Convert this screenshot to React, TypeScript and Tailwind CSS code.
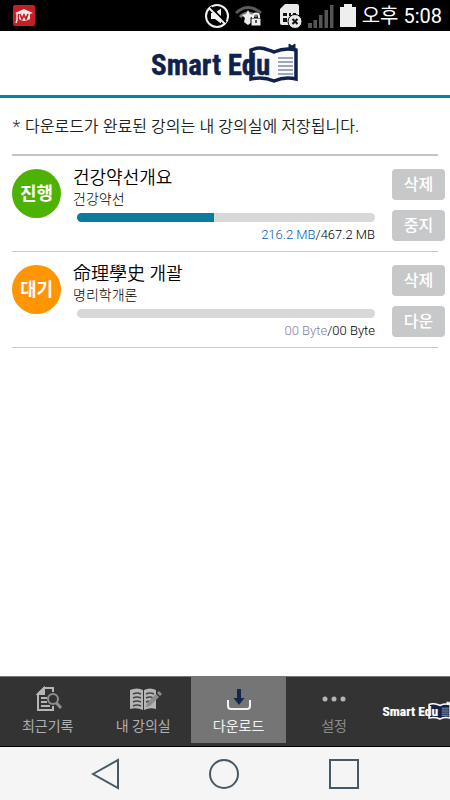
import React from 'react';
import clsx from 'clsx';

interface Lecture {
    title: string;
    course: string;
    status: string;
    active: boolean;
    done: string;
    total: string;
    percent: number;
    action: string;
}

const lectures: Lecture[] = [
    { title: '건강약선개요', course: '건강약선', status: '진행', active: true, done: '216.2 MB', total: '467.2 MB', percent: 46, action: '중지' },
    { title: '命理學史 개괄', course: '명리학개론', status: '대기', active: false, done: '00 Byte', total: '00 Byte', percent: 0, action: '다운' },
];

const Logo: React.FC<{ light?: boolean; className?: string }> = ({ light, className }) => {
    const ink = light ? '#ffffff' : '#10224b';
    const page = light ? '#10224b' : '#fafafa';
    return (
        <svg viewBox="0 0 150 42" className={className} role="img" aria-label="Smart Edu">
            <path
                d="M101 7C110 3 116 6 124 9C131 6 138 5 146 7V36C138 34 131 35 124 38C117 35 110 34 101 36Z"
                fill={page}
                stroke={ink}
                strokeWidth="3.500"
            />
            <path d="M139 7V1L142 3L145 1V7Z" fill={ink} stroke={ink} strokeWidth="1" />
            <path d="M128 15H143M128 19H143M128 23H143M128 27H143M128 31H143" stroke={light ? '#c5cbd8' : '#7f8ba5'} strokeWidth="1.4" />
            <text
                x="1"
                y="32"
                fontSize="29"
                fill={ink}
                stroke={ink}
                strokeWidth="0.4"
                className="font-['Roboto_Condensed','Liberation_Sans_Narrow','Liberation_Sans',sans-serif] font-bold"
            >
                Smart Edu
            </text>
        </svg>
    );
};

const StatusBar: React.FC = () => (
    <div className="flex h-[31px] items-center bg-black pl-[13px] pr-2 text-white">
        <svg viewBox="0 0 22 22" className="size-[22px]">
            <rect width="22" height="21" rx="2" fill="#c41f27" />
            <path d="M2 8L11 4L20 8L17 9V14Q11 18 6 14V9Z" fill="#f3e9e6" />
            <path d="M4 8V15L3 18" stroke="#f3e9e6" strokeWidth="1.4" fill="none" />
            <path d="M7 9L9 14L11 10L13 14L15 9" stroke="#c41f27" strokeWidth="1.7" fill="none" />
        </svg>
        <div className="ml-auto flex items-center">
            <svg viewBox="0 0 24 24" className="mr-[6px] size-6" fill="none" stroke="#f2f2f2" strokeWidth="2">
                <circle cx="12" cy="12" r="11" />
                <path d="M6 9H10L16 4.500V19.500L10 15H6Z" fill="#f2f2f2" stroke="none" />
                <path d="M5.500 3L21 18.500" stroke="#000" strokeWidth="2" />
                <path d="M4 4L20 20" />
            </svg>
            <svg viewBox="0 0 27 22" className="mr-4 h-[22px] w-[27px]" fill="none">
                <path d="M1 8Q13 -3 26 8" stroke="#5b5b5b" strokeWidth="3" />
                <path d="M5 12Q13 4 22 12" stroke="#777" strokeWidth="3" />
                <path d="M13 5L15 9L19 10L16 13L17 17L13 20L9 17L10 13L7 10L11 9Z" fill="#eee" />
                <rect x="16" y="13" width="10" height="8" fill="#eee" stroke="#000" />
                <path d="M18 13V11.500A2.500 2.500 0 0 1 24 11.500V13" stroke="#eee" strokeWidth="2" />
                <path d="M21 15V18" stroke="#222" strokeWidth="1.500" />
            </svg>
            <svg viewBox="0 0 25 27" className="mr-[5px] h-[27px] w-[25px]">
                <path d="M2 7L7 2H19Q21 2 21 4V21Q21 23 19 23H4Q2 23 2 21Z" fill="#e9e9e9" />
                <path d="M5 11H9V14H5ZM11 11H13V14H11ZM15 11H18V14H15ZM5 16H9V20H5ZM11 16H13V20H11Z" fill="#111" />
                <circle cx="17" cy="19.500" r="7" fill="#e9e9e9" stroke="#000" />
                <path d="M14.500 17L19.500 22M19.500 17L14.500 22" stroke="#111" strokeWidth="2" />
            </svg>
            <svg viewBox="0 0 26 24" className="mr-[6px] h-6 w-[26px]" fill="#555">
                <path d="M0 19H4V24H0ZM5.500 16H9V24H5.500ZM11 11H14.500V24H11ZM16.500 6H20V24H16.500ZM22 1H25.500V24H22Z" />
            </svg>
            <svg viewBox="0 0 16 23" className="mr-[6px] h-[23px] w-4" fill="#eee">
                <path d="M4 0H12V3H16V23H0V3H4Z" />
            </svg>
            <span className="text-xl leading-6">오후 5:08</span>
        </div>
    </div>
);

const GrayButton: React.FC<{ label: string }> = ({ label }) => (
    <button type="button" className="h-[31px] w-[53px] rounded bg-[#c7c8ca] text-base font-medium leading-6 text-white">
        {label}
    </button>
);

const LectureRow: React.FC<{ lecture: Lecture }> = ({ lecture }) => (
    <li className="mx-3 flex h-24 border-b border-[#c8c8c8] pt-[13px]">
        <span
            className={clsx(
                'flex size-[49px] shrink-0 items-center justify-center rounded-full text-lg font-bold text-white',
                lecture.active ? 'bg-[#4db202]' : 'bg-[#ff9500]'
            )}
        >
            {lecture.status}
        </span>
        <div className="ml-3 min-w-0 flex-1">
            <h2 className="text-lg font-[350] leading-[18px] text-black">{lecture.title}</h2>
            <p className="text-sm font-light leading-6 text-black">{lecture.course}</p>
            <div
                role="progressbar"
                aria-label={lecture.title}
                aria-valuenow={lecture.percent}
                className="ml-1 mt-[2px] h-[9px] overflow-hidden rounded-full bg-[#d8d8d8]"
            >
                <div className="h-full bg-[#0b7b9b]" style={{ width: `${lecture.percent}%` }} />
            </div>
            <p className="mt-[5px] text-right text-[13px] font-light leading-4 text-black">
                <span className={lecture.active ? 'text-[#0062b8]' : 'text-[#8580a8]'}>{lecture.done}</span>/{lecture.total}
            </p>
        </div>
        <div className="-mr-[7px] ml-[17px] flex flex-col gap-[10px]">
            <GrayButton label="삭제" />
            <GrayButton label={lecture.action} />
        </div>
    </li>
);

const RecentIcon = () => (
    <svg viewBox="-3 0 30 26" className="h-[26px] w-[30px]" fill="none" stroke="#b5b5b5" strokeWidth="2">
        <path d="M17 6V2H8L2 8V24H17V20" />
        <path d="M8 2V8H2Z" fill="#b5b5b5" />
        <path d="M5 12H11M5 16H11M5 20H14" />
        <circle cx="17" cy="13" r="5" stroke="#8f8f8f" fill="#333" />
        <path d="M20.500 17L25 22" stroke="#8f8f8f" strokeWidth="3" />
    </svg>
);

const ClassroomIcon = () => (
    <svg viewBox="-7 0 41 26" className="h-[26px] w-[41px]" fill="none">
        <path d="M0 4Q7 1 13 4V24Q7 21 0 23ZM14 4Q20 1 26 4V23Q20 21 14 24Z" fill="#b5b5b5" />
        <path d="M3 8Q7 6 11 8M3 12Q7 10 11 12M3 16Q7 14 11 16M3 20Q7 18 11 20M16 8Q20 6 24 8M16 12Q20 10 23 12M16 16L19 15" stroke="#444" strokeWidth="1.500" />
        <path d="M16 21L17 17L26 8L29 11L20 20Z" fill="#8c8c8c" />
        <path d="M27 7L29 5L32 8L30 10Z" fill="#8c8c8c" />
    </svg>
);

const DownloadIcon = () => (
    <svg viewBox="0 0 26 26" className="size-[26px]" fill="none">
        <path d="M2 14V20Q2 23 5 23H21Q24 23 24 20V14" stroke="#f2f2f2" strokeWidth="2" />
        <path d="M11 3H15V12H18.500L13 19L7.500 12H11Z" fill="#13264f" />
    </svg>
);

const MoreIcon = () => (
    <svg viewBox="0 0 26 26" className="size-[26px]" fill="#b5b5b5">
        <circle cx="4" cy="13" r="2.500" />
        <circle cx="13" cy="13" r="2.500" />
        <circle cx="22" cy="13" r="2.500" />
    </svg>
);

const tabs = [
    { label: '최근기록', icon: <RecentIcon />, tone: 'text-[#b0b0b0]' },
    { label: '내 강의실', icon: <ClassroomIcon />, tone: 'text-[#b0b0b0]' },
    { label: '다운로드', icon: <DownloadIcon />, tone: 'bg-[#757575] text-[#f2f2f2]' },
    { label: '설정', icon: <MoreIcon />, tone: 'text-[#8c8c8c]' },
];

const App: React.FC = () => (
    <div className="flex min-h-screen flex-col bg-white font-['Roboto','Noto_Sans_CJK_KR',sans-serif]">
        <StatusBar />
        <header className="flex h-[67px] justify-center border-b-[3px] border-[#0b7f9f] pt-3">
            <Logo className="h-[42px] w-[150px]" />
        </header>

        <main className="flex-1">
            <p className="mx-3 border-b-2 border-[#c4c4c4] py-4 font-['Noto_Sans','Noto_Sans_CJK_KR',sans-serif] text-base font-[350] leading-6 text-[#222]">
                * 다운로드가 완료된 강의는 내 강의실에 저장됩니다.
            </p>
            <ul>
                {lectures.map((lecture) => (
                    <LectureRow key={lecture.title} lecture={lecture} />
                ))}
            </ul>
        </main>

        <nav className="flex h-[71px] overflow-hidden border-b border-t border-b-black border-t-[#777] bg-[#333]">
            {tabs.map((tab) => (
                <button
                    key={tab.label}
                    type="button"
                    className={clsx('flex h-[66px] min-w-0 flex-[7] flex-col items-center pt-[9px] text-sm leading-5', tab.tone)}
                >
                    {tab.icon}
                    <span className="mt-1">{tab.label}</span>
                </button>
            ))}
            <div className="flex min-w-0 flex-[5] items-center overflow-hidden pb-[2px]">
                <Logo light className="h-5 w-[70px] shrink-0" />
            </div>
        </nav>

        <div className="flex h-[53px] items-center justify-center gap-[88px] bg-[#f5f5f5]">
            <button type="button" aria-label="Back">
                <svg viewBox="0 0 30 32" className="h-8 w-[30px]" fill="none" stroke="#455a64" strokeWidth="2">
                    <path d="M3 16L28 2V30Z" />
                </svg>
            </button>
            <button type="button" aria-label="Home">
                <svg viewBox="0 0 32 32" className="size-8" fill="none" stroke="#455a64" strokeWidth="2">
                    <circle cx="16" cy="16" r="14" />
                </svg>
            </button>
            <button type="button" aria-label="Recent apps">
                <svg viewBox="0 0 32 32" className="size-8" fill="none" stroke="#455a64" strokeWidth="2">
                    <path d="M2 2H30V30H2Z" />
                </svg>
            </button>
        </div>
    </div>
);

export default App;
